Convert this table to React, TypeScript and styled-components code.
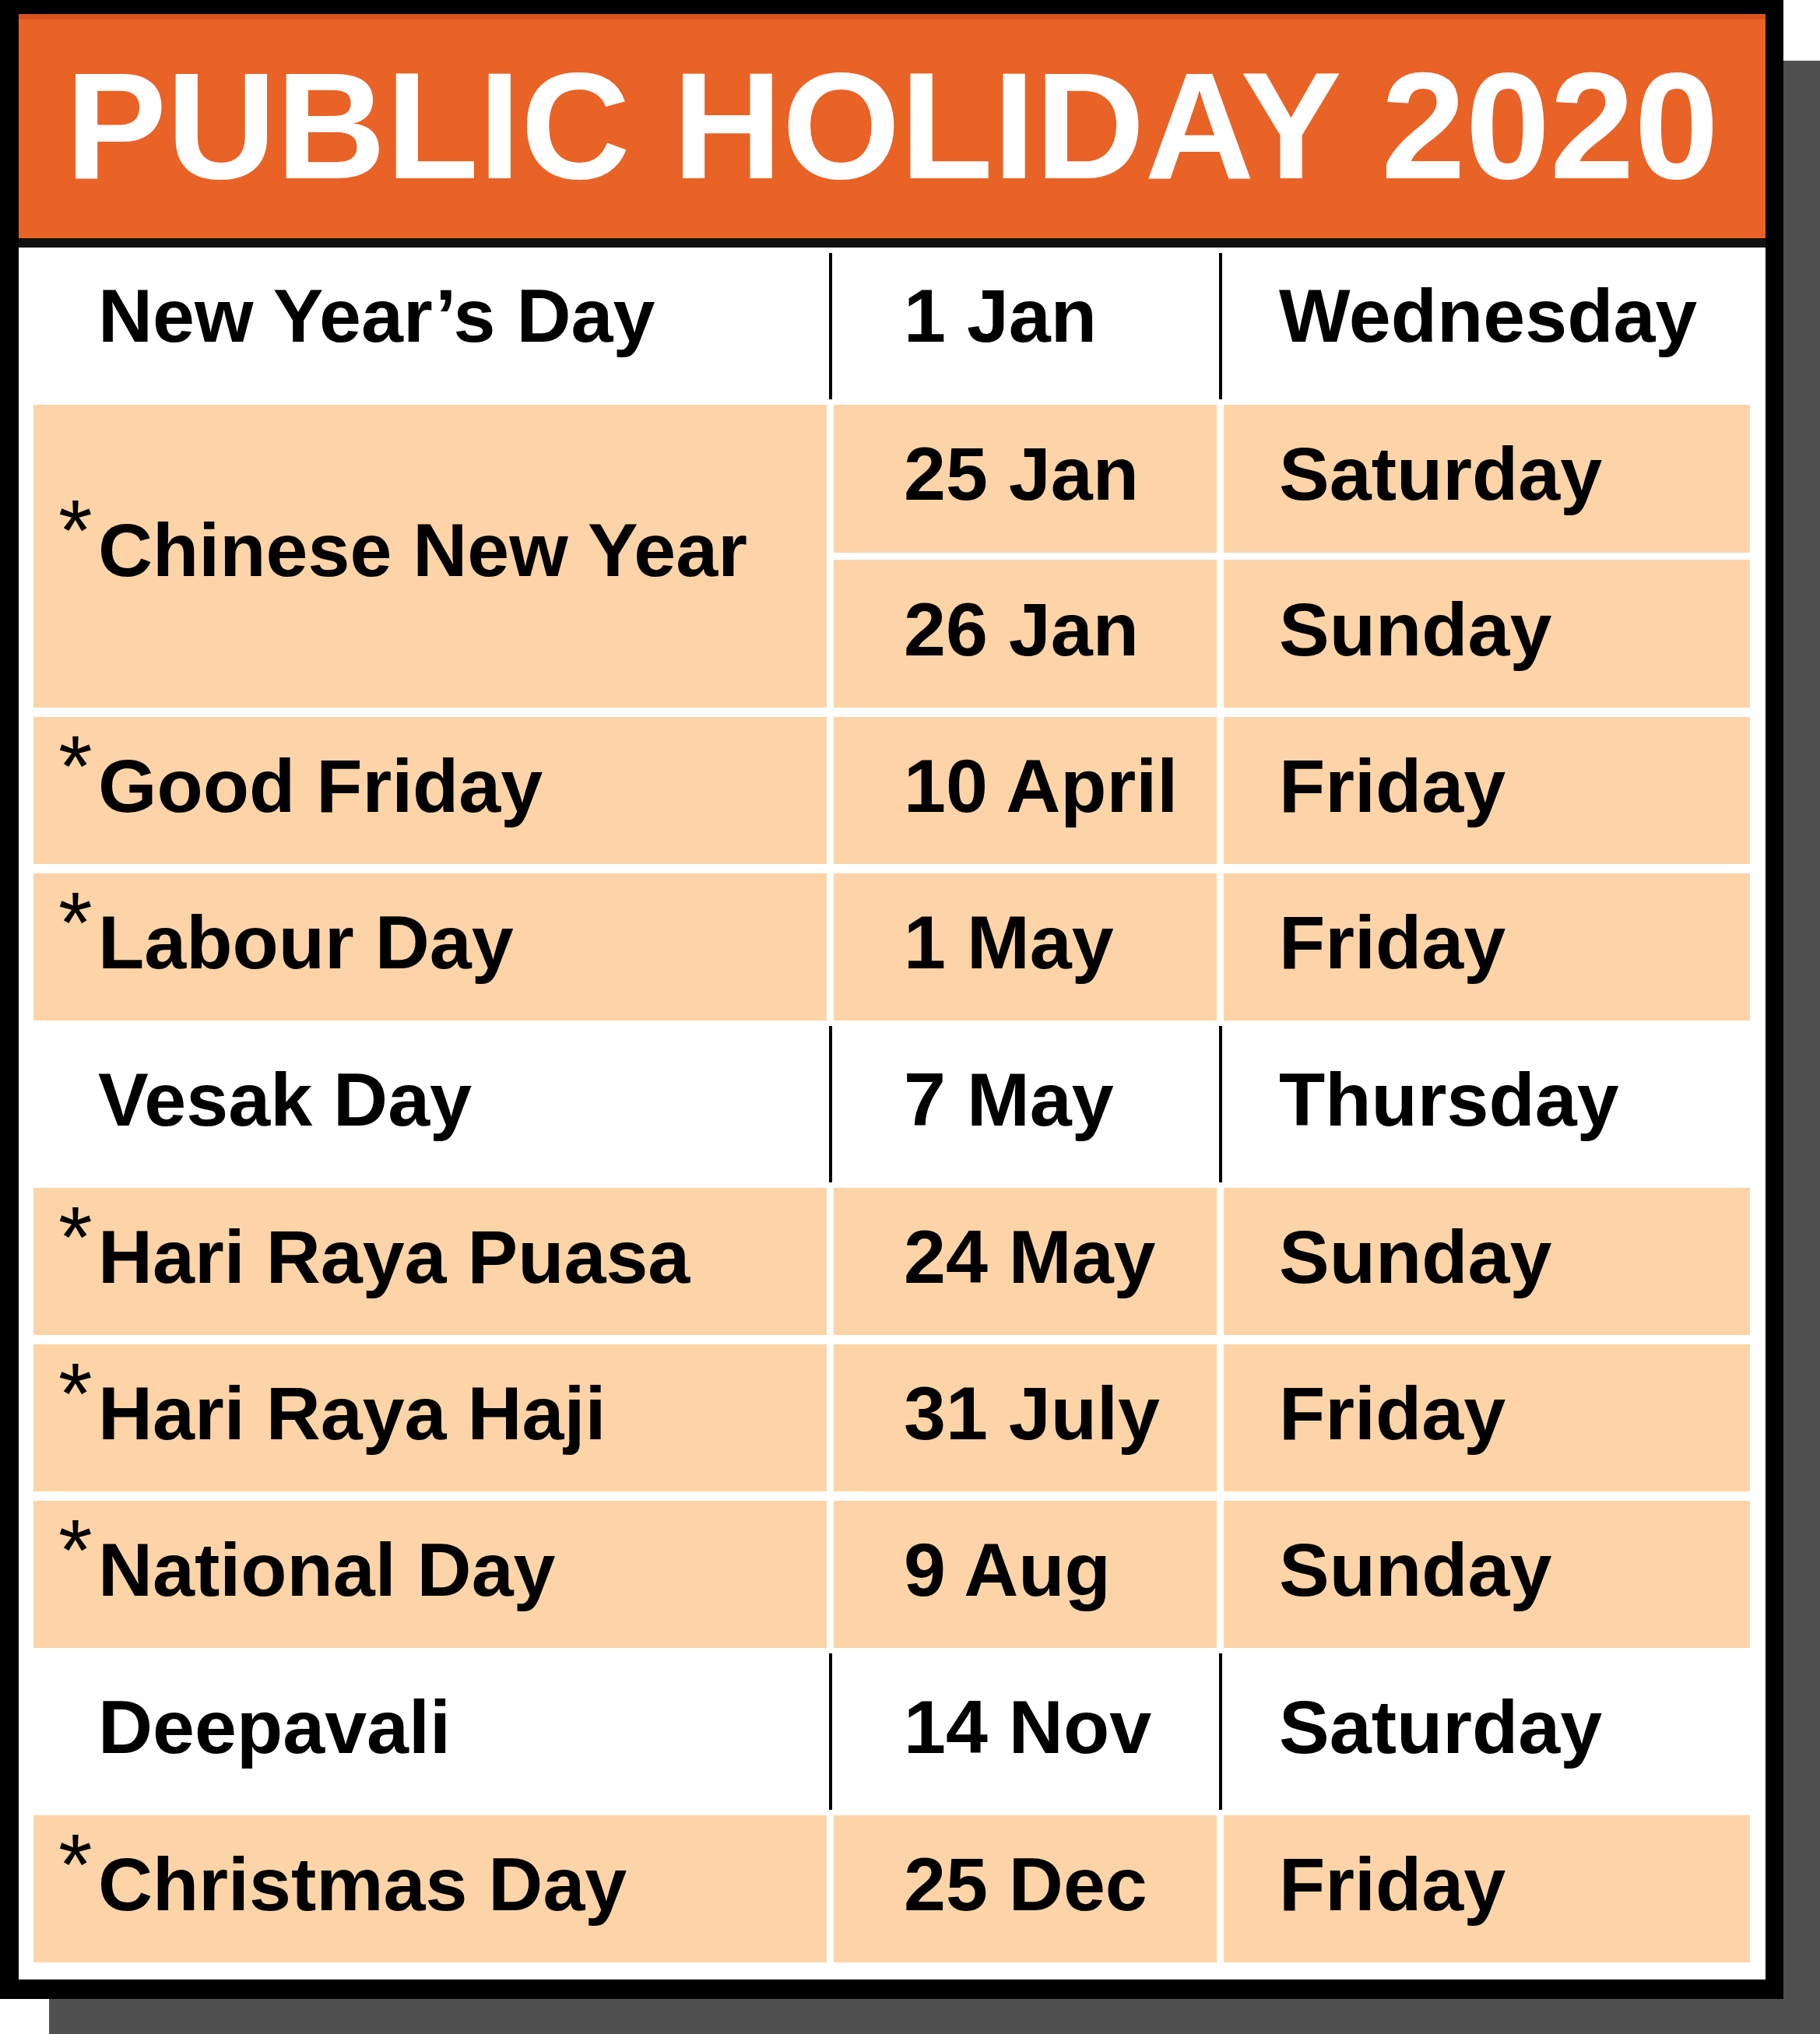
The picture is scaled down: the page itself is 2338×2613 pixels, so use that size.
import React from "react";
import styled, { createGlobalStyle } from "styled-components";

const Global = createGlobalStyle`
  html, body { margin: 0; padding: 0; background: #ffffff; }
  body { width: 2338px; min-height: 2613px; overflow: hidden; }
`;

const Page = styled.div`
  width: 2338px;
  height: 2613px;
  overflow: hidden;
  font-family: "Liberation Sans", Arial, sans-serif;
`;

const Frame = styled.div`
  width: 2291px;
  box-sizing: border-box;
  border-style: solid;
  border-color: #000;
  border-width: 18px 23px 25px 24px;
  background: #fff;
  box-shadow: 55px 70px 0 -8px #505050;
  display: flex;
  flex-direction: column;
`;

const Header = styled.div`
  height: 272px;
  border-top: 7px solid #d9541d;
  border-bottom: 12px solid #111;
  background: #e96226;
  display: flex;
  align-items: center;
  justify-content: center;
  padding-bottom: 9px;
  box-sizing: content-box;
`;

const Title = styled.h1`
  margin: 0;
  color: #fff;
  font-family: "Liberation Sans", Arial, sans-serif;
  font-weight: 700;
  font-size: 195px;
  line-height: 1;
  white-space: nowrap;
`;

const Body = styled.div`
  display: flex;
  flex-direction: column;
  padding: 0 19px 22px 19px;
`;

const cols = "1019px 9px 492px 9px 676px";

const PeachRow = styled.div`
  display: grid;
  grid-template-columns: ${cols};
  height: 189px;
  & + & { margin-top: 12px; }
`;

const WhiteRow = styled.div<{ $first?: boolean }>`
  display: grid;
  grid-template-columns: ${cols};
  height: ${(p) => (p.$first ? 188 : 201)}px;
  padding: 7px 0;
`;

const SplitRow = styled.div`
  display: grid;
  grid-template-columns: ${cols};
  grid-template-rows: 190px 190px;
  row-gap: 9px;
  margin-bottom: 12px;
`;

const Cell = styled.div<{ $peach?: boolean; $pad: number; $span?: boolean; $col?: number; $lift?: number }>`
  display: flex;
  align-items: center;
  box-sizing: border-box;
  padding-left: ${(p) => p.$pad}px;
  padding-bottom: ${(p) => 8 + (p.$lift ?? 0)}px;
  background: ${(p) => (p.$peach ? "#fcd4a7" : "transparent")};
  grid-row: ${(p) => (p.$span ? "1 / span 2" : "auto")};
  grid-column: ${(p) => (p.$col ? p.$col : "auto")};
  font-weight: 700;
  font-size: 97px;
  line-height: 1;
  color: #000;
  white-space: nowrap;
`;

const Divider = styled.div<{ $line?: boolean; $span?: boolean }>`
  justify-self: center;
  width: 4px;
  background: ${(p) => (p.$line ? "#000" : "transparent")};
  grid-row: ${(p) => (p.$span ? "1 / span 2" : "auto")};
`;

const Marker = styled.span`
  display: inline-block;
  width: 51px;
  font-weight: 400;
  font-size: 112px;
  line-height: 0;
  vertical-align: 20px;
`;

type Holiday = { name: string; star: boolean; date: string; day: string };

const NAME_PAD = 32;
const DATE_PAD = 90;
const DAY_PAD = 71;

const Name = ({ h }: { h: { name: string; star: boolean } }) => (
  <span>
    <Marker>{h.star ? "*" : ""}</Marker>
    {h.name}
  </span>
);

const Peach = ({ h }: { h: Holiday }) => (
  <PeachRow>
    <Cell $peach $pad={NAME_PAD} $lift={4}>
      <Name h={h} />
    </Cell>
    <Divider />
    <Cell $peach $pad={DATE_PAD} $lift={4}>{h.date}</Cell>
    <Divider />
    <Cell $peach $pad={DAY_PAD} $lift={4}>{h.day}</Cell>
  </PeachRow>
);

const White = ({ h, first }: { h: Holiday; first?: boolean }) => {
  const lift = first ? 20 : 4;
  return (
    <WhiteRow $first={first}>
      <Cell $pad={NAME_PAD} $lift={lift}>
        <Name h={h} />
      </Cell>
      <Divider $line />
      <Cell $pad={DATE_PAD} $lift={lift}>{h.date}</Cell>
      <Divider $line />
      <Cell $pad={DAY_PAD} $lift={lift}>{h.day}</Cell>
    </WhiteRow>
  );
};

export default function App() {
  return (
    <Page>
      <Global />
      <Frame>
        <Header>
          <Title>PUBLIC HOLIDAY 2020</Title>
        </Header>
        <Body>
          <White first h={{ name: "New Year\u2019s Day", star: false, date: "1 Jan", day: "Wednesday" }} />
          <SplitRow>
            <Cell $peach $pad={NAME_PAD} $span $lift={8}>
              <Name h={{ name: "Chinese New Year", star: true }} />
            </Cell>
            <Divider $span />
            <Cell $peach $pad={DATE_PAD} $lift={6}>25 Jan</Cell>
            <Divider />
            <Cell $peach $pad={DAY_PAD} $lift={6}>Saturday</Cell>
            <Cell $peach $pad={DATE_PAD} $col={3} $lift={4}>26 Jan</Cell>
            <Divider />
            <Cell $peach $pad={DAY_PAD} $lift={4}>Sunday</Cell>
          </SplitRow>
          <Peach h={{ name: "Good Friday", star: true, date: "10 April", day: "Friday" }} />
          <Peach h={{ name: "Labour Day", star: true, date: "1 May", day: "Friday" }} />
          <White h={{ name: "Vesak Day", star: false, date: "7 May", day: "Thursday" }} />
          <Peach h={{ name: "Hari Raya Puasa", star: true, date: "24 May", day: "Sunday" }} />
          <Peach h={{ name: "Hari Raya Haji", star: true, date: "31 July", day: "Friday" }} />
          <Peach h={{ name: "National Day", star: true, date: "9 Aug", day: "Sunday" }} />
          <White h={{ name: "Deepavali", star: false, date: "14 Nov", day: "Saturday" }} />
          <Peach h={{ name: "Christmas Day", star: true, date: "25 Dec", day: "Friday" }} />
        </Body>
      </Frame>
    </Page>
  );
}
